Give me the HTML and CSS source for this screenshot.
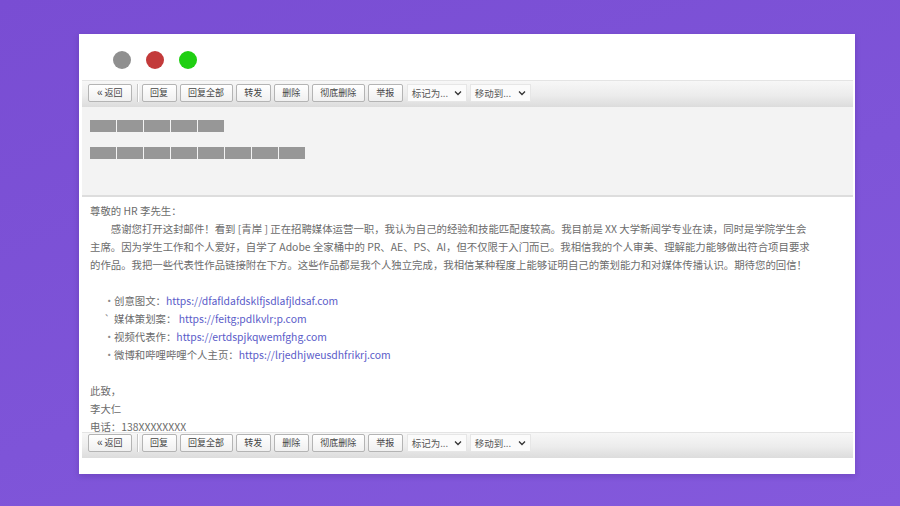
FILE: index.html
```html
<!DOCTYPE html>
<html lang="zh-CN">
<head>
<meta charset="utf-8">
<title>邮件</title>
<link rel="stylesheet" href="styles.css">
</head>
<body>
<div class="stage">
  <div class="window">
    <div class="titlebar">
      <span class="dot dot-gray"></span>
      <span class="dot dot-red"></span>
      <span class="dot dot-green"></span>
    </div>

    <div class="toolbar">
      <span class="btn btn-back"><span class="laquo">«</span> 返回</span>
      <span class="sep"></span>
      <span class="btn">回复</span>
      <span class="btn">回复全部</span>
      <span class="btn">转发</span>
      <span class="btn">删除</span>
      <span class="btn">彻底删除</span>
      <span class="btn">举报</span>
      <span class="select">标记为...<svg class="chev" viewBox="0 0 8 6" width="8" height="6"><path d="M1 1.5 L4 4.5 L7 1.5" fill="none" stroke="#333" stroke-width="1.3"/></svg></span>
      <span class="select">移动到...<svg class="chev" viewBox="0 0 8 6" width="8" height="6"><path d="M1 1.5 L4 4.5 L7 1.5" fill="none" stroke="#333" stroke-width="1.3"/></svg></span>
    </div>

    <div class="header">
      <div class="redact">
        <span class="blk"></span><span class="blk"></span><span class="blk"></span><span class="blk"></span><span class="blk"></span>
      </div>
      <div class="redact">
        <span class="blk"></span><span class="blk"></span><span class="blk"></span><span class="blk"></span><span class="blk"></span><span class="blk"></span><span class="blk"></span><span class="blk"></span>
      </div>
    </div>

    <div class="mailbody">
      <p class="line">尊敬的 HR 李先生：</p>
      <p class="para">感谢您打开这封邮件！看到 [青岸 ] 正在招聘媒体运营一职，我认为自己的经验和技能匹配度较高。我目前是 XX 大学新闻学专业在读，同时是学院学生会<br>主席。因为学生工作和个人爱好，自学了 Adobe 全家桶中的 PR、AE、PS、AI，但不仅限于入门而已。我相信我的个人审美、理解能力能够做出符合项目要求<br>的作品。我把一些代表性作品链接附在下方。这些作品都是我个人独立完成，我相信某种程度上能够证明自己的策划能力和对媒体传播认识。期待您的回信！</p>
      <ul class="links">
        <li><span class="mark">·</span>创意图文：<a class="link">https://dfafldafdsklfjsdlafjldsaf.com</a></li>
        <li><span class="mark">`</span>媒体策划案：&nbsp;<a class="link">https://feitg;pdlkvlr;p.com</a></li>
        <li><span class="mark">·</span>视频代表作：<a class="link">https://ertdspjkqwemfghg.com</a></li>
        <li><span class="mark">·</span>微博和哔哩哔哩个人主页：<a class="link">https://lrjedhjweusdhfrikrj.com</a></li>
      </ul>
      <p class="line">此致，</p>
      <p class="line">李大仁</p>
      <p class="line">电话：138XXXXXXXX</p>
    </div>

    <div class="toolbar toolbar-bottom">
      <span class="btn btn-back"><span class="laquo">«</span> 返回</span>
      <span class="sep"></span>
      <span class="btn">回复</span>
      <span class="btn">回复全部</span>
      <span class="btn">转发</span>
      <span class="btn">删除</span>
      <span class="btn">彻底删除</span>
      <span class="btn">举报</span>
      <span class="select">标记为...<svg class="chev" viewBox="0 0 8 6" width="8" height="6"><path d="M1 1.5 L4 4.5 L7 1.5" fill="none" stroke="#333" stroke-width="1.3"/></svg></span>
      <span class="select">移动到...<svg class="chev" viewBox="0 0 8 6" width="8" height="6"><path d="M1 1.5 L4 4.5 L7 1.5" fill="none" stroke="#333" stroke-width="1.3"/></svg></span>
    </div>
    <div class="footer"></div>
  </div>
</div>
</body>
</html>
```

FILE: styles.css
```css
* { box-sizing: border-box; }

html, body {
  margin: 0;
  padding: 0;
}

body {
  width: 900px;
  height: 506px;
  overflow: hidden;
  background: linear-gradient(160deg, #794dd3 0%, #7e54d8 55%, #8459dc 100%);
  font-family: "Noto Sans CJK SC", "Noto Sans", sans-serif;
}

.stage {
  padding: 34px 0 0 79px;
}

.window {
  width: 776px;
  height: 440px;
  background: #ffffff;
  padding: 0 2px 0 3px;
  display: flex;
  flex-direction: column;
  box-shadow: 0 2px 6px rgba(40, 10, 90, 0.2);
}

.titlebar {
  height: 46px;
  flex: none;
  display: flex;
  align-items: flex-start;
  gap: 15px;
  padding: 17px 0 0 31px;
}

.dot {
  width: 18px;
  height: 18px;
  border-radius: 50%;
  display: block;
}
.dot-gray { background: #8f8f8f; }
.dot-red { background: #c33a3a; }
.dot-green { background: #1fcf12; }

.toolbar {
  height: 27px;
  flex: none;
  display: flex;
  align-items: flex-start;
  gap: 3px;
  padding: 3px 0 0 6px;
  background: linear-gradient(#f7f7f7 0%, #ececec 55%, #dcdcdc 100%);
  border-top: 1px solid #e4e4e4;
}

.toolbar-bottom {
  height: 26px;
  padding-top: 1px;
}

.btn {
  height: 18px;
  padding: 0 7.5px;
  border: 1px solid #b4b4b4;
  border-radius: 2px;
  background: linear-gradient(#ffffff, #f0f0f0);
  font-size: 9px;
  line-height: 16px;
  color: #444;
  white-space: nowrap;
}

.btn-back { padding: 0 8px; }

.laquo {
  font-family: "Liberation Sans", sans-serif;
  font-size: 10px;
}

.sep {
  width: 2px;
  height: 18px;
  margin-left: 2px;
  border-left: 1px solid #c6c6c6;
  border-right: 1px solid #ffffff;
}

.select {
  height: 18px;
  margin-left: 1px;
  display: flex;
  align-items: center;
  justify-content: space-between;
  width: 60px;
  padding: 0 4px 0 4px;
  background: #fbfbfb;
  border: 1px solid #e6e6e6;
  font-size: 9.5px;
  color: #555;
  white-space: nowrap;
}
.select + .select { margin-left: 0; width: 61px; }

.chev { display: block; }

.header {
  height: 90px;
  flex: none;
  background: #f3f3f3;
  border-bottom: 2px solid #dddddd;
  padding: 13px 0 0 8px;
  display: flex;
  flex-direction: column;
  gap: 15px;
}

.redact {
  display: flex;
  gap: 1px;
}

.blk {
  width: 26px;
  height: 12px;
  background: #979797;
  display: block;
}

.mailbody {
  flex: 1;
  min-height: 0;
  overflow: hidden;
  padding: 5px 8px 0 8px;
  font-size: 10.4px;
  line-height: 18px;
  color: #6c6c6c;
}

.line, .para {
  margin: 0;
  white-space: nowrap;
}

.para {
  text-indent: 2em;
  margin-bottom: 18px;
}

.links {
  list-style: none;
  margin: 0 0 18px 0;
  padding: 0 0 0 14px;
  white-space: nowrap;
}

.mark {
  display: inline-block;
  width: 10px;
  color: #8a8a8a;
}

.link {
  color: #5a5cc9;
  text-decoration: none;
}

.footer {
  height: 16px;
  flex: none;
}
```
